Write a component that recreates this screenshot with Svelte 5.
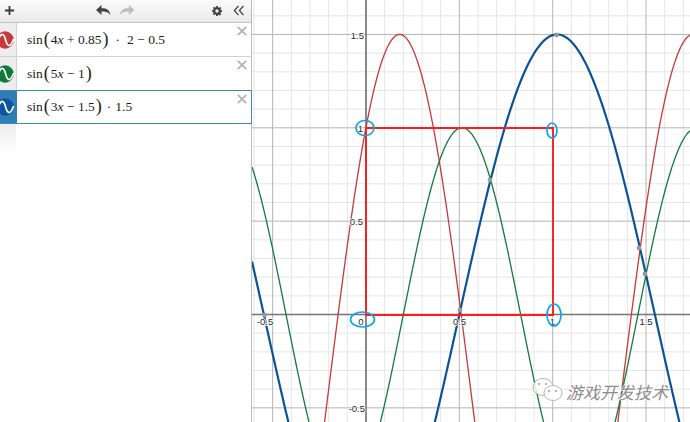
<script>
  const X0 = 366, Y0 = 314.5, S = 186.7;
  const sx = (x) => X0 + x * S;
  const sy = (y) => Y0 - y * S;
  const W0 = 252, W1 = 690;

  function curve(f) {
    let d = '';
    for (let px = W0; px <= W1; px += 1) {
      const y = sy(f((px - X0) / S));
      d += (d ? 'L' : 'M') + px + ' ' + y.toFixed(2);
    }
    return d;
  }

  const red = curve((x) => Math.sin(4 * x + 0.85) * 2 - 0.5);
  const green = curve((x) => Math.sin(5 * x - 1));
  const blue = curve((x) => Math.sin(3 * x - 1.5) * 1.5);

  const minorV = [], minorH = [], majorV = [], majorH = [];
  for (let i = -6; i <= 18; i++) {
    if (i % 5 === 0) majorV.push(sx(i / 10)); else minorV.push(sx(i / 10));
  }
  for (let i = -6; i <= 17; i++) {
    if (i % 5 === 0) majorH.push(sy(i / 10)); else minorH.push(sy(i / 10));
  }

  const points = [[264.5, 315], [460, 310], [490, 180], [556.5, 35], [639, 248], [645, 274]];
  const labels = [
    { x: 358, y: 39, t: '1.5', a: 'end', dx: 6 },
    { x: 363, y: 132, t: '1', a: 'end', dx: 0 },
    { x: 363, y: 225, t: '0.5', a: 'end', dx: 0 },
    { x: 361, y: 325, t: '0', a: 'middle', dx: 0 },
    { x: 265, y: 325, t: '-0.5', a: 'middle', dx: 0 },
    { x: 459.5, y: 325, t: '0.5', a: 'middle', dx: 0 },
    { x: 552.5, y: 325, t: '1', a: 'middle', dx: 0 },
    { x: 646, y: 325, t: '1.5', a: 'middle', dx: 0 },
    { x: 365, y: 412, t: '-0.5', a: 'end', dx: 0 }
  ];
  const rows = [
    { tone: 'red', sel: false },
    { tone: 'green', sel: false },
    { tone: 'blue', sel: true }
  ];
</script>

<div class="app">
  <aside class="panel">
    <header class="toolbar">
      <svg class="tool plus" viewBox="0 0 12 12"><path d="M6 1v10M1 6h10" /></svg>
      <div class="history">
        <svg class="tool" viewBox="0 0 14 10"><path class="fill dark" d="M5 0v3C9 2.800 12.500 4 13 9 11 6.300 8.500 5.700 5 6v3L0 4.500z" /></svg>
        <svg class="tool" viewBox="0 0 14 10"><path class="fill light" d="M9 0v3C5 2.800 1.500 4 1 9 3 6.300 5.500 5.700 9 6v3l5-4.500z" /></svg>
      </div>
      <svg class="tool gear" viewBox="0 0 12 12">
        <path class="fill dark" fill-rule="evenodd" d="M5 0h2l.3 1.600 1 .4L9.700 1.100l1.400 1.400-.9 1.400.4 1 1.600.3v2l-1.600.3-.4 1 .9 1.400-1.400 1.400-1.400-.9-1 .4L7 12H5l-.3-1.600-1-.4-1.400.9-1.400-1.400.9-1.400-.4-1L0 7V5l1.600-.3.400-1-.9-1.400 1.400-1.400 1.400.9 1-.4zM6 4a2 2 0 1 0 0 4 2 2 0 0 0 0-4z" />
      </svg>
      <svg class="tool chev" viewBox="0 0 13 12"><path d="M6 1 1.500 6 6 11M11.500 1 7 6l4.500 5" /></svg>
    </header>

    {#each rows as row, i}
      <div class="row" class:sel={row.sel}>
        <div class="tag {row.tone}">
          <svg viewBox="0 0 17 20"><circle cx="5.500" cy="10" r="9.200" class="disc" /><path d="M-2 10.500C1 1.500 4 2.500 6 10s5 8.500 8.500-1" class="wave" /></svg>
        </div>
        <div class="math">
          {#if i === 0}
            <span>sin</span><span class="par">(</span><span>4<i>x</i> + 0.85</span><span class="par">)</span><span class="gap">·</span><span>2 − 0.5</span>
          {:else if i === 1}
            <span>sin</span><span class="par">(</span><span>5<i>x</i> − 1</span><span class="par">)</span>
          {:else}
            <span>sin</span><span class="par">(</span><span>3<i>x</i> − 1.5</span><span class="par">)</span><span class="dot">·</span><span>1.5</span>
          {/if}
        </div>
        <svg class="close" viewBox="0 0 10 10"><path d="M.8.800l8.400 8.400M9.200.800.8 9.200" /></svg>
      </div>
    {/each}
    <div class="rest"><div class="fade"></div></div>
  </aside>

  <main class="graph">
    <svg viewBox="252 0 438 422" class="plot">
      {#each minorV as x}<line x1={x} x2={x} y1="0" y2="422" class="minor" />{/each}
      {#each minorH as y}<line x1="252" x2="690" y1={y} y2={y} class="minor" />{/each}
      {#each majorV as x}<line x1={x} x2={x} y1="0" y2="422" class="major" />{/each}
      {#each majorH as y}<line x1="252" x2="690" y1={y} y2={y} class="major" />{/each}
      <line x1={X0} x2={X0} y1="0" y2="422" class="axis" />
      <line x1="252" x2="690" y1={Y0} y2={Y0} class="axis" />

      <path d={red} class="fn f-red" />
      <path d={green} class="fn f-green" />
      <path d={blue} class="fn f-blue" />

      {#each points as p}<circle cx={p[0]} cy={p[1]} r="2.400" class="pt" />{/each}

      <path d="M366 128H553V315H366Z" class="square" />

      {#each labels as l}
        <text x={l.x + l.dx} y={l.y} text-anchor={l.a} class="label">{l.t}</text>
      {/each}

      <ellipse cx="365" cy="128" rx="9" ry="7.500" class="mark" />
      <ellipse cx="552" cy="130.500" rx="5" ry="7.500" class="mark" />
      <ellipse cx="362.500" cy="319.500" rx="12" ry="7.500" class="mark" />
      <ellipse cx="554" cy="315" rx="7" ry="11" class="mark" />

      <g class="wx">
        <ellipse cx="543" cy="387" rx="10" ry="8.500" />
        <ellipse cx="553" cy="393" rx="9" ry="7.500" />
        <circle cx="539" cy="384" r="1" class="eye" />
        <circle cx="546" cy="384" r="1" class="eye" />
        <circle cx="549" cy="391" r="1" class="eye" />
        <circle cx="556" cy="391" r="1" class="eye" />
      </g>
      <text x="566" y="399" class="mark-text">游戏开发技术</text>
    </svg>
  </main>
</div>

<style>
  :global(body) { margin: 0; background: #fff; }
  .app {
    display: flex;
    width: 690px;
    height: 422px;
    overflow: hidden;
    font-family: "Liberation Serif", serif;
  }
  .panel {
    width: 252px;
    flex: none;
    display: flex;
    flex-direction: column;
    box-sizing: border-box;
    border-right: 1px solid #bdbdbd;
    background: #fff;
  }
  .toolbar {
    height: 23px;
    flex: none;
    box-sizing: border-box;
    display: flex;
    align-items: center;
    padding: 0 6px 1px 4px;
    background: linear-gradient(#fbfbfb, #e9e9e9);
    border-bottom: 1px solid #c4c4c4;
  }
  .tool { display: block; height: 11px; width: auto; }
  .tool path { fill: none; stroke: #3a3a3a; stroke-width: 2; }
  .tool path.fill { stroke: none; }
  .tool path.dark { fill: #444; }
  .tool path.light { fill: #bdbdbd; }
  .plus { width: 11px; }
  .history {
    display: flex;
    gap: 8px;
    margin-left: 81px;
    margin-right: auto;
  }
  .gear { height: 10px; margin-right: 11px; }
  .chev path { stroke-width: 1.300; }
  .row {
    height: 34px;
    flex: none;
    box-sizing: border-box;
    display: flex;
    align-items: center;
    position: relative;
    border-bottom: 1px solid #d2d2d2;
  }
  .row.sel {
    height: 34px;
    margin-top: -1px;
    border-top: 1px solid #3f88bd;
    border-bottom: 1px solid #3f88bd;
    border-right: 1px solid #3f88bd;
    margin-right: -1px;
  }
  .tag {
    width: 17px;
    align-self: stretch;
    flex: none;
    box-sizing: border-box;
    display: flex;
    align-items: center;
    background: #ededed;
    border-right: 1px solid #d2d2d2;
    overflow: hidden;
  }
  .tag svg { width: 17px; height: 20px; display: block; }
  .tag .wave { fill: none; stroke: #fff; stroke-width: 1.800; }
  .red .disc { fill: #c8393a; }
  .green .disc { fill: #0f7a3a; }
  .blue .disc { fill: #0d559c; }
  .tag.blue { background: #2f7db5; border-right-color: #2f7db5; }
  .math {
    display: flex;
    align-items: center;
    margin-left: 10px;
    font-size: 13.500px;
    color: #1c1c1c;
    white-space: pre;
  }
  .math i { font-style: italic; }
  .par { font-size: 18px; line-height: 18px; font-weight: 300; margin: 0 1px; transform: translateY(-1px); }
  .gap { margin: 0 7px 0 6px; }
  .dot { margin: 0 4px; }
  .close {
    position: absolute;
    right: 4px;
    top: 3px;
    width: 10px;
    height: 10px;
  }
  .close path { fill: none; stroke: #b4b4b4; stroke-width: 1.800; }
  .rest { flex: 1; }
  .fade {
    width: 16px;
    height: 30px;
    background: linear-gradient(#ececec, #fff);
  }
  .graph { flex: 1; min-width: 0; }
  .plot { display: block; width: 438px; height: 422px; }
  .minor { stroke: #e6e6e6; stroke-width: 1; }
  .major { stroke: #b4b4b4; stroke-width: 1; }
  .axis { stroke: #757575; stroke-width: 1.600; }
  .fn { fill: none; }
  .f-red { stroke: #c9383c; stroke-width: 1.300; }
  .f-green { stroke: #137a3e; stroke-width: 1.300; }
  .f-blue { stroke: #0b5398; stroke-width: 2.200; }
  .pt { fill: #9a9a9a; }
  .square { fill: none; stroke: #ff1c1c; stroke-width: 1.900; }
  .mark { fill: none; stroke: #10a4ea; stroke-width: 1.700; }
  .label {
    font-family: "Liberation Sans", sans-serif;
    font-size: 9.500px;
    fill: #2a2a2a;
    paint-order: stroke;
    stroke: #fff;
    stroke-width: 1.500px;
  }
  .wx ellipse { fill: rgba(255, 255, 255, 0.85); stroke: #b5b5b5; stroke-width: 1; }
  .wx .eye { fill: #999; }
  .mark-text {
    font-family: "Noto Sans CJK SC", sans-serif;
    font-size: 17px;
    font-style: italic;
    fill: #8d8d8d;
    paint-order: stroke;
    stroke: rgba(255, 255, 255, 0.8);
    stroke-width: 1.500px;
  }
</style>
